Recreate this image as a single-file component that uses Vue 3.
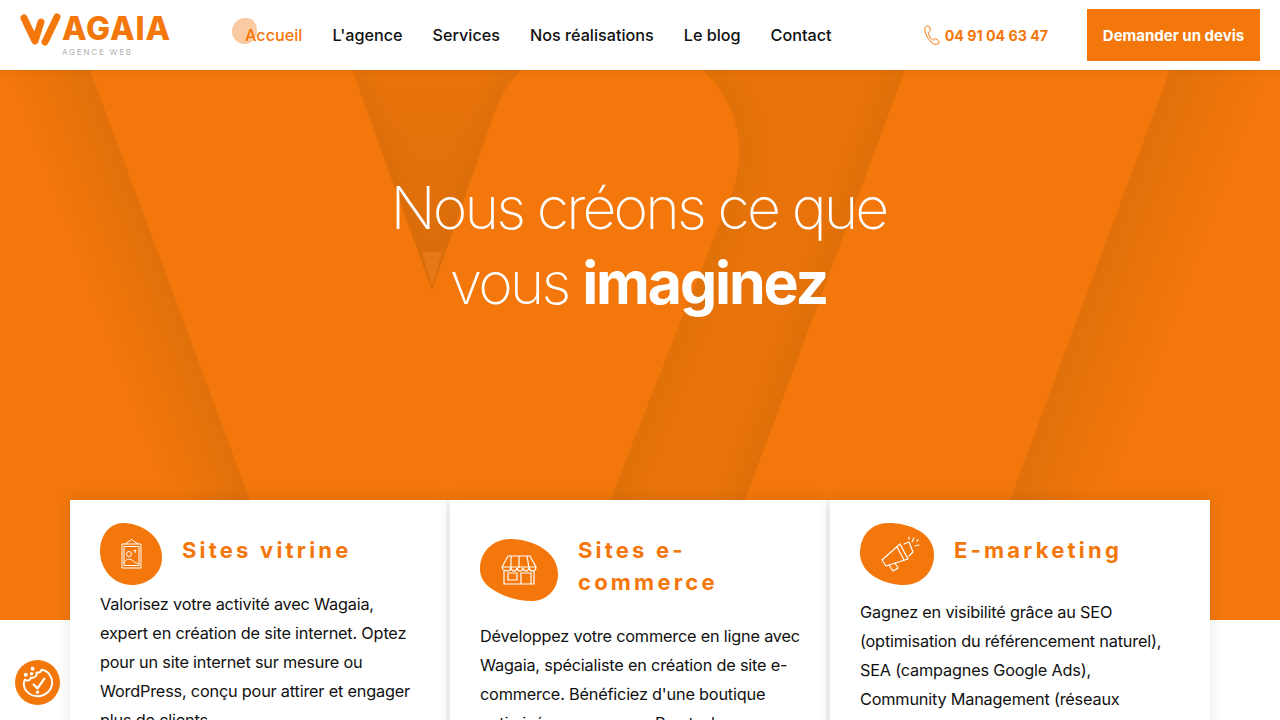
<template>
  <div class="page">
    <header class="header">
      <a class="logo">
        <svg class="logo-w" viewBox="0 0 44 34" width="44" height="34">
          <path d="M4 5 L15 28 L21 9 M25 29 L37 4" fill="none" stroke="#f3770a" stroke-width="7" stroke-linecap="round" stroke-linejoin="round" />
        </svg>
        <div class="logo-text">
          <span class="logo-name">AGAIA</span>
          <span class="logo-sub">AGENCE WEB</span>
        </div>
      </a>

      <nav class="nav">
        <a
          v-for="item in navItems"
          :key="item"
          class="nav-item"
          :class="{ active: item === 'Accueil' }"
        >{{ item }}</a>
      </nav>

      <a class="phone">
        <svg viewBox="0 0 16 20" width="16" height="20" fill="none" stroke="#f3770a" stroke-width="1">
          <path d="M2 1.500 C0.500 2.500 0.500 5 1.500 8 C3 12.500 6 17 9.500 18.800 C11.500 19.800 14 19.500 15 18 C15.500 17 15 16 14 15.300 L12 14 C11 13.500 10.300 13.800 9.800 14.600 C9.300 15.300 8.500 15.300 7.800 14.600 C6.300 13 5 10.500 4.500 8.500 C4.300 7.500 4.600 7 5.500 6.700 C6.300 6.400 6.600 5.700 6.400 4.800 L5.700 2.300 C5.300 0.800 3.500 0.500 2 1.500Z" />
        </svg>
        <span>04 91 04 63 47</span>
      </a>
      <a class="quote-btn">Demander un devis</a>
    </header>

    <section class="hero">
      <svg class="hero-bg" viewBox="0 0 1280 550" width="1280" height="550">
        <defs>
          <linearGradient id="bandLeft" gradientUnits="userSpaceOnUse" x1="170" y1="215" x2="98" y2="242">
            <stop offset="0" stop-color="#a85a10" stop-opacity="0.24" />
            <stop offset="1" stop-color="#a85a10" stop-opacity="0" />
          </linearGradient>
          <linearGradient id="bandRight" gradientUnits="userSpaceOnUse" x1="1090" y1="215" x2="1175" y2="247">
            <stop offset="0" stop-color="#a85a10" stop-opacity="0.24" />
            <stop offset="1" stop-color="#a85a10" stop-opacity="0" />
          </linearGradient>
          <linearGradient id="vFill" x1="0" x2="0" y1="0" y2="1">
            <stop offset="0" stop-color="#a85a10" stop-opacity="0.14" />
            <stop offset="1" stop-color="#a85a10" stop-opacity="0.3" />
          </linearGradient>
          <clipPath id="midClip">
            <path d="M703 0 C730 25 742 60 739 90 C737 110 733 122 729 130 L610 430 L745 430 L905 0Z" />
          </clipPath>
          <clipPath id="vClip">
            <path d="M352 0 L432 220 L497 36 Q505 15 522 0Z" />
          </clipPath>
          <filter id="soft" x="-30%" y="-30%" width="160%" height="160%">
            <feGaussianBlur stdDeviation="9" />
          </filter>
        </defs>

        <polygon points="0,0 90,0 250,430 130,430" fill="url(#bandLeft)" />

        <path d="M352 0 L432 220 L497 36 Q505 15 522 0Z" fill="url(#vFill)" />
        <g clip-path="url(#vClip)">
          <g filter="url(#soft)">
            <path d="M352 0 L432 220 L497 36 Q505 15 522 0" fill="none" stroke="#a85a10" stroke-width="24" stroke-opacity="0.12" />
          </g>
        </g>
        <polygon points="422,182 442,182 432,217" fill="#f3811c" opacity="0.6" />

        <path d="M703 0 C730 25 742 60 739 90 C737 110 733 122 729 130 L610 430 L745 430 L905 0Z" fill="#a85a10" opacity="0.14" />
        <g clip-path="url(#midClip)">
          <g filter="url(#soft)">
            <path d="M703 0 C730 25 742 60 739 90 C737 110 733 122 729 130 L610 430" fill="none" stroke="#a85a10" stroke-width="30" stroke-opacity="0.13" />
            <path d="M905 0 L745 430" fill="none" stroke="#a85a10" stroke-width="30" stroke-opacity="0.15" />
          </g>
        </g>

        <polygon points="1170,0 1280,0 1280,430 1010,430" fill="url(#bandRight)" />
      </svg>
      <h1 class="hero-title">Nous créons ce que<br />vous <strong>imaginez</strong></h1>
    </section>

    <section class="cards">
      <article class="card">
        <div class="card-head">
          <svg class="blob" viewBox="0 0 62 62" width="62" height="62">
            <path d="M23 0 C38 0 62 10 62 35 C62 52 46 62 32 62 C14 62 0 47 0 28 C0 12 10 0 23 0Z" fill="#f3770a" />
            <g fill="none" stroke="#fff" stroke-width="1">
              <path d="M22 45 V21 H41 V45Z M24 23.500 H39 V42.500 H24Z M25 21 L31.500 16.500 L38 21" />
              <circle cx="29" cy="31" r="2.500" />
              <path d="M24 40 C26 35.500 31 35 33 38 C35 40 37 40 39 41 M33 28 L36 27 L35 30" />
            </g>
          </svg>
          <h2 class="card-title">Sites vitrine</h2>
        </div>
        <p class="card-text">Valorisez votre activité avec Wagaia, expert en création de site internet. Optez pour un site internet sur mesure ou WordPress, conçu pour attirer et engager plus de clients.</p>
      </article>

      <article class="card">
        <div class="card-head">
          <svg class="blob" viewBox="0 0 78 62" width="78" height="62">
            <path d="M30 0 C52 0 78 12 78 35 C78 52 65 62 52 62 C38 62 24 58 12 50 C4 45 0 38 0 30 C0 12 14 0 30 0Z" fill="#f3770a" />
            <g fill="none" stroke="#fff" stroke-width="1.200">
              <path d="M28 17 H50 L56 28 C56 33 50 33 49 29 C48 33 44 33 43 29 C42 33 38 33 37 29 C36 33 32 33 31 29 C30 33 23 33 22 28Z" />
              <path d="M22 28 H56 M31 17 L31 29 M39 17 V29 M47 17 L49 29" />
              <path d="M24 32 V45 H54 V32 M41 45 V34 H51 V45 M28 34 H37 V41 H28Z" />
            </g>
          </svg>
          <h2 class="card-title">Sites e-commerce</h2>
        </div>
        <p class="card-text">Développez votre commerce en ligne avec Wagaia, spécialiste en création de site e-commerce. Bénéficiez d'une boutique optimisée, sur mesure, Prestashop, WooCommerce ou Shopify.</p>
      </article>

      <article class="card card-last">
        <div class="card-head">
          <svg class="blob" viewBox="0 0 74 62" width="74" height="62">
            <path d="M28 0 C50 0 74 10 74 32 C74 50 60 62 44 62 C26 62 0 52 0 30 C0 12 12 0 28 0Z" fill="#f3770a" />
            <g fill="none" stroke="#fff" stroke-width="1.200" stroke-linejoin="round" stroke-linecap="round">
              <path d="M22 37 L40 21 L48 36 L26 43Z" />
              <path d="M37 24 L44 37 M44 21 L49 19 L53 29 L49 33" />
              <path d="M29 42 L33 48 L38 45 L35 40" />
              <path d="M52 19 L54 15 M55 23 L59 22 M49 16 L49 14 M57 18 L58 17" />
            </g>
          </svg>
          <h2 class="card-title">E-marketing</h2>
        </div>
        <p class="card-text">Gagnez en visibilité grâce au SEO (optimisation du référencement naturel), SEA (campagnes Google Ads), Community Management (réseaux sociaux) et création de contenus.</p>
      </article>
    </section>

    <button class="cookie" aria-label="Cookies">
      <svg viewBox="0 0 46 46" width="45" height="45" fill="none" stroke="#fff" stroke-width="2" stroke-linecap="round" stroke-linejoin="round">
        <path d="M27 10 C34 11 38 17 38 23 C38 31 31 37 23 37 C15 37 9 31 9 24 C9 22 9.500 21 10 20 C13 22 16 21 16 18 C20 19 23 16 22 13 C25 13 27 12 27 10Z" />
        <path d="M19 25 L23 29 L30 19" stroke-width="2.300" />
        <circle cx="23" cy="33" r="0.800" fill="#fff" />
        <circle cx="18" cy="9" r="1" fill="#fff" />
        <circle cx="11" cy="15" r="1" fill="#fff" />
        <circle cx="17" cy="14" r="0.800" fill="#fff" />
      </svg>
    </button>
  </div>
</template>

<script setup>
const navItems = ['Accueil', "L'agence", 'Services', 'Nos réalisations', 'Le blog', 'Contact']
</script>

<style scoped>
.page {
  position: relative;
  width: 1280px;
  height: 720px;
  overflow: hidden;
  background: #fff;
  font-family: Inter, "Noto Sans", sans-serif;
  color: #111;
}

.header {
  position: relative;
  z-index: 2;
  display: flex;
  align-items: center;
  height: 70px;
  padding: 0 20px;
  box-sizing: border-box;
  background: #fff;
  box-shadow: 0 1px 6px rgba(0, 0, 0, 0.08);
}

.logo {
  display: flex;
  align-items: flex-start;
  width: 151px;
  height: 42px;
  margin-top: -2px;
}

.logo-w {
  flex: none;
  margin-right: -2px;
}

.logo-text {
  display: flex;
  flex-direction: column;
  align-items: flex-start;
}

.logo-name {
  font-size: 32px;
  line-height: 32px;
  font-weight: 800;
  color: #f3770a;
  letter-spacing: 0.9px;
}

.logo-sub {
  margin-top: 2px;
  font-size: 8px;
  line-height: 10px;
  letter-spacing: 1.8px;
  color: #b0b0b0;
}

.nav {
  display: flex;
  gap: 30px;
  margin-left: 74px;
}

.nav-item {
  position: relative;
  font-size: 16.2px;
  font-weight: 500;
  color: #111;
  white-space: nowrap;
}

.nav-item.active {
  color: #f3770a;
}

.nav-item.active::before {
  content: "";
  position: absolute;
  left: -13px;
  top: -7px;
  width: 25px;
  height: 26px;
  border-radius: 55% 45% 50% 50%;
  background: #f3770a;
  opacity: 0.38;
}

.phone {
  display: flex;
  align-items: center;
  gap: 5px;
  margin-left: auto;
  font-size: 14.2px;
  font-weight: 700;
  color: #f3770a;
  white-space: nowrap;
}

.quote-btn {
  display: flex;
  align-items: center;
  justify-content: center;
  width: 173px;
  height: 52px;
  margin-left: 39px;
  background: #f3770a;
  color: #fff;
  font-size: 15px;
  font-weight: 700;
  white-space: nowrap;
}

.hero {
  position: relative;
  height: 550px;
  background: #f3770a;
  overflow: hidden;
}

.hero-bg {
  position: absolute;
  left: 0;
  top: 0;
}

.hero-title {
  position: relative;
  margin: 0;
  padding: 100px 3px 0 0;
  text-align: center;
  font-size: 59px;
  line-height: 75px;
  font-weight: 200;
  letter-spacing: -2.9px;
  color: #fff;
}

.hero-title strong {
  font-weight: 700;
  letter-spacing: -2.1px;
}

.cards {
  position: relative;
  display: grid;
  grid-template-columns: 376px 376px 380px;
  gap: 4px;
  width: 1140px;
  margin: -120px auto 0;
  background: #fff;
}

.card {
  padding: 23px 26px 30px 30px;
  background: #fff;
  box-shadow: 0 0 14px rgba(0, 0, 0, 0.1);
}

.card-last {
  padding-right: 30px;
}

.card-head {
  display: flex;
  align-items: center;
  gap: 20px;
}

.blob {
  flex: none;
}

.card:nth-child(2) .card-head {
  margin-top: 11px;
  padding-right: 24px;
}

.card-title {
  margin: 0;
  padding-bottom: 8px;
  font-size: 22px;
  line-height: 32px;
  font-weight: 700;
  letter-spacing: 3.2px;
  color: #f3770a;
}

.card-text {
  margin: 5px 0 0;
  font-size: 16.3px;
  line-height: 29px;
  letter-spacing: -0.2px;
  color: #111;
}

.card:nth-child(2) .card-text {
  margin-top: 16px;
}

.card-last .card-text {
  margin-top: 13px;
}

.cookie {
  position: absolute;
  left: 15px;
  top: 660px;
  width: 45px;
  height: 45px;
  padding: 0;
  border: 0;
  border-radius: 50%;
  background: #f3770a;
}

.cookie svg {
  display: block;
}
</style>
